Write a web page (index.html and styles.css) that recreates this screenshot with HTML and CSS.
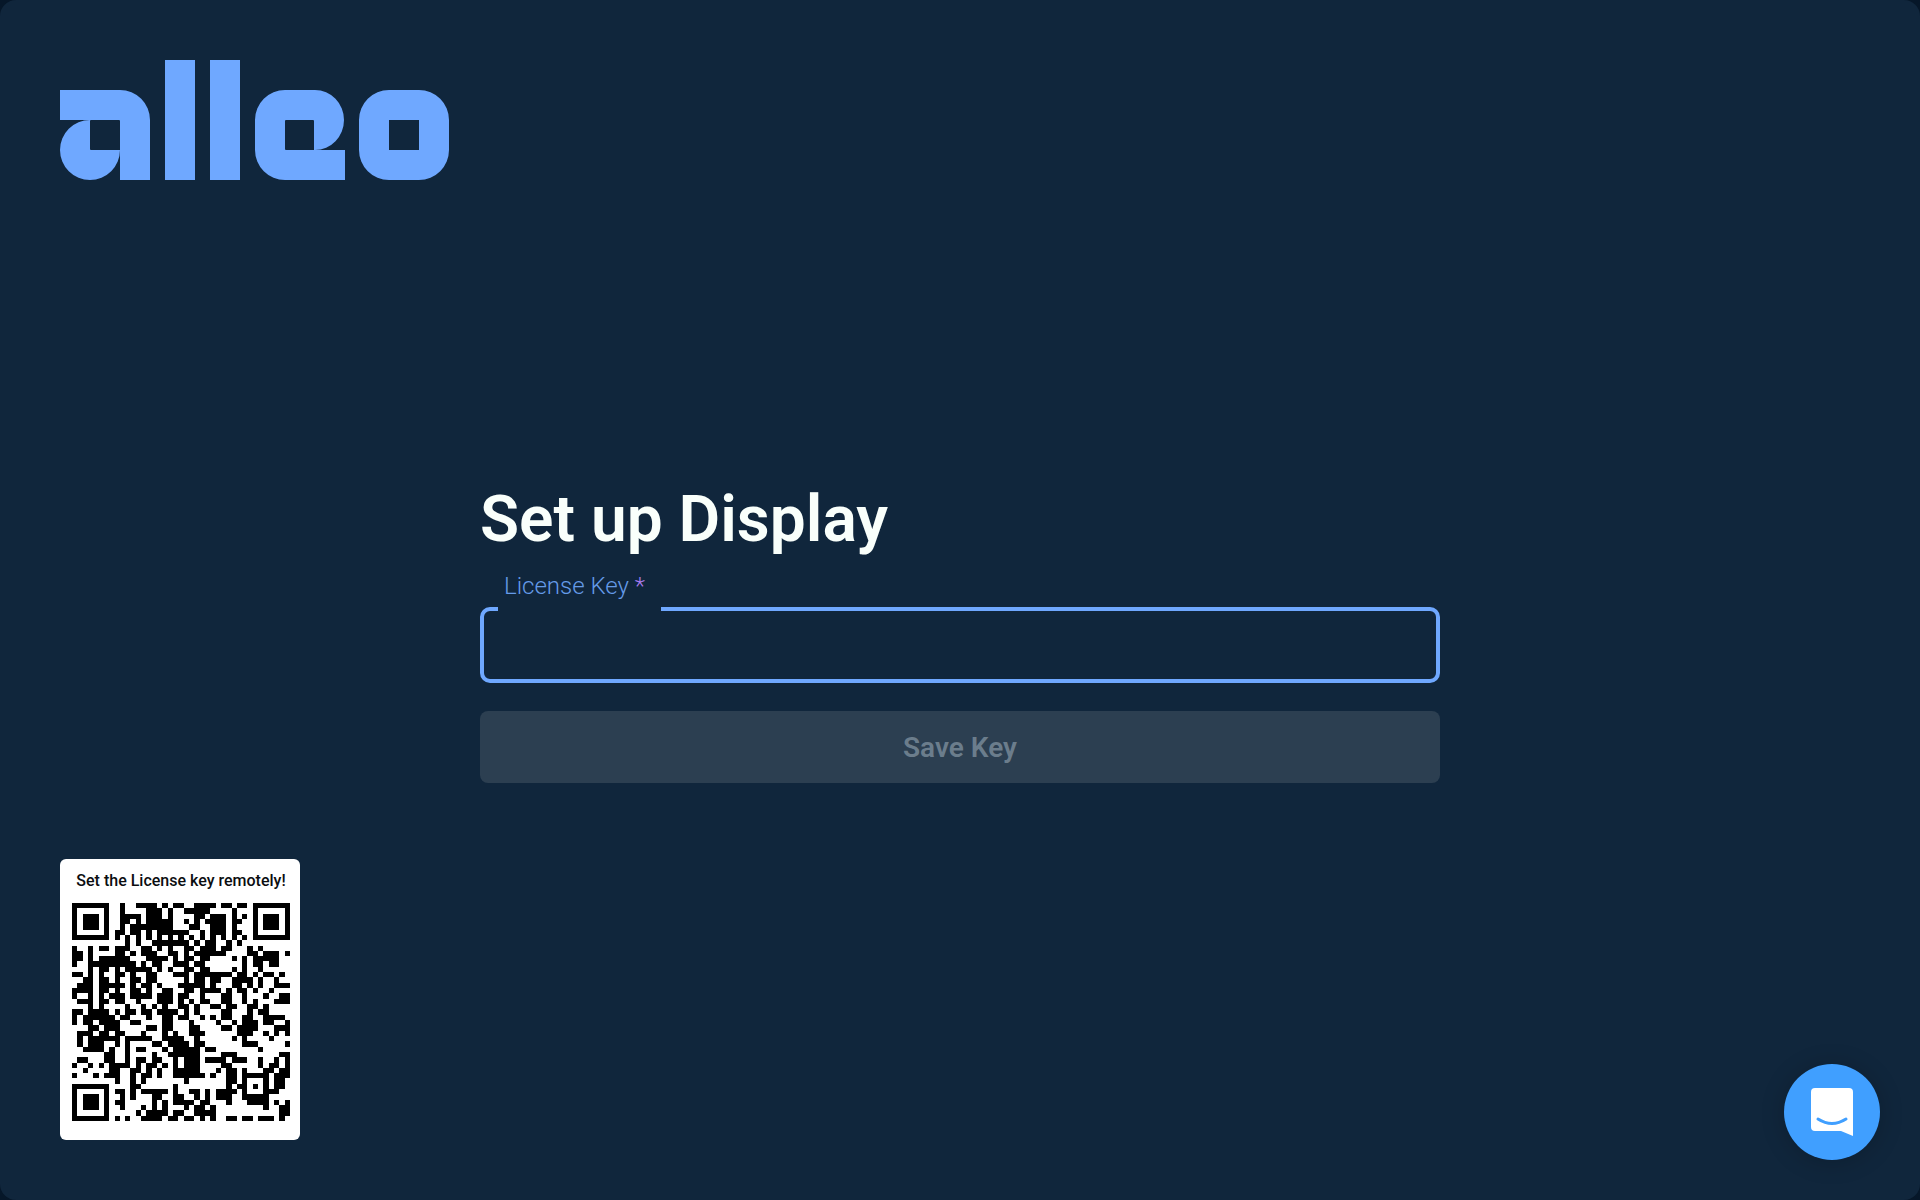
FILE: index.html
```
<!DOCTYPE html>
<html lang="en">
<head>
<meta charset="utf-8">
<meta name="viewport" content="width=device-width, initial-scale=1">
<title>Set up Display</title>
<link rel="stylesheet" href="styles.css">
</head>
<body>
<div class="screen">
  <header>
    <svg class="logo" viewBox="0 0 389 120" role="img" aria-label="alleo">
      <path d="M0 30H60A30 30 0 0 1 90 60V120H60V90A30 30 0 1 1 30 60H0ZM31 60Q30 60 30 61V89Q30 90 31 90H60V61Q60 60 59 60Z" fill-rule="evenodd"/>
      <path d="M105 0h30v120h-30zM150 0h30v120h-30z"/>
      <path d="M225 30H255A29 30 0 0 1 255 90H285V120H225A30 30 0 0 1 195 90V60A30 30 0 0 1 225 30ZM226 60Q225 60 225 61V89Q225 90 226 90H254V61Q254 60 253 60Z" fill-rule="evenodd"/>
      <path d="M329 30H359A30 30 0 0 1 389 60V90A30 30 0 0 1 359 120H329A30 30 0 0 1 299 90V60A30 30 0 0 1 329 30ZM329 60V90H359V60Z" fill-rule="evenodd"/>
    </svg>
  </header>
  <main class="setup">
    <h1>Set up Display</h1>
    <form>
      <fieldset class="field">
        <legend><label for="license">License Key <span class="required">*</span></label></legend>
        <input id="license" type="text" required>
      </fieldset>
      <button class="save" type="submit" disabled>Save Key</button>
    </form>
  </main>
  <aside class="remote">
    <p>Set the License key remotely!</p>
    <svg class="qr" viewBox="0 0 41 41" shape-rendering="crispEdges" role="img" aria-label="QR code"><path id="modules"/></svg>
  </aside>
</div>
<button class="chat" type="button" aria-label="Open chat">
  <svg viewBox="0 0 42 48"><path class="bubble" d="M4 0H38Q42 0 42 4V48L30 43H4Q0 43 0 39V4Q0 0 4 0Z"/><path class="smile" d="M7 31Q21 40 35 31"/></svg>
</button>
<script src="qr.js"></script>
</body>
</html>
```
FILE: styles.css
```
* { box-sizing: border-box; }
body {
  margin: 0;
  background: #061729;
  font-family: Roboto, "Liberation Sans", sans-serif;
}
.screen {
  min-height: 100vh;
  padding: 60px;
  display: grid;
  grid-template-rows: auto 1fr auto;
  background: #10263c;
  border-radius: 16px;
}
.logo {
  display: block;
  width: 389px;
  height: 120px;
  fill: #6fa8ff;
}
.setup {
  width: 50vw;
  justify-self: center;
  align-self: end;
  padding-bottom: 76px;
}
h1 {
  margin: 0 0 16px;
  color: #f9fffb;
  font-size: 64px;
  font-weight: 600;
  line-height: 76px;
}
form {
  display: flex;
  flex-direction: column;
  gap: 28px;
}
.field {
  height: 109px;
  margin: 0;
  padding: 0 14px;
  min-width: 0;
  border: 4px solid #6fa8ff;
  border-radius: 10px;
}
legend {
  width: 163px;
  height: 70px;
  padding: 0 6px;
  color: #659be8;
  font-size: 24px;
  font-weight: 300;
  line-height: 24px;
  white-space: nowrap;
}
.required { color: #a97cf0; }
.field input {
  display: block;
  width: 100%;
  height: 32px;
  padding: 0;
  border: 0;
  outline: 0;
  background: transparent;
  color: #f9fffb;
  font: inherit;
  font-size: 24px;
}
.save {
  height: 72px;
  border: 0;
  border-radius: 8px;
  background: #2c3f51;
  color: #6b7d8c;
  font: inherit;
  font-size: 28px;
  font-weight: 600;
}
.remote {
  width: 240px;
  padding: 12px 10px 19px 12px;
  background: #fff;
  border-radius: 6px;
}
.remote p {
  margin: 0 0 12px;
  color: #0b0d10;
  font-size: 16px;
  font-weight: 500;
  line-height: 20px;
  text-align: center;
  white-space: nowrap;
}
.qr {
  display: block;
  width: 100%;
}
.chat {
  position: fixed;
  right: 40px;
  bottom: 40px;
  width: 96px;
  height: 96px;
  display: grid;
  place-items: center;
  padding: 0;
  border: 0;
  border-radius: 50%;
  background: #409fff;
  box-shadow: 0 2px 24px rgba(0, 0, 0, 0.2);
}
.chat svg { width: 42px; height: 48px; }
.bubble { fill: #fff; }
.smile {
  fill: none;
  stroke: #409fff;
  stroke-width: 3;
  stroke-linecap: round;
}
```
FILE: qr.js
```
const rows = [
  "#######..#..####.#.##..####.##.##.#######",
  "#.....#..#....###.#..#####....#...#.....#",
  "#.###.#..####.###.#....##.###.#.#.#.###.#",
  "#.###.#..##.#.#####..#.#.####.##..#.###.#",
  "#.###.#..#.########...##..###.#...#.###.#",
  "#.....#.##.##.#.######..#.###.##..#.....#",
  "#######.#.#.#.#.#.#.#.#.#.#.#.#.#.#######",
  "..........#.#..#######.#.##..#.#.........",
  "#..#.##.###..##.#.#..##.###.##...#.#.....",
  "##.#....##.#.###..##.#.######....##.###.#",
  "##.#.######...####.#.##.##....#.#.#####..",
  "#..#########.#.##..###.##.......#.##.##..",
  "...#.##.#.#####.#.#..##.##....#.#..#.....",
  "##.#.#..##.#..##...###.#######.##.#.##.#.",
  "..##.##.#..##.##.....#.##.##..####.#..#..",
  ".###.#####.#.##.#...#####.#...##.#.#..###",
  "####.##.#..##.#..##..##.####.#.##.#..#...",
  "#..#.#.###.####.###.##..#...##..#...#..##",
  ".###.##.##..#...###.#.#.##..##..#.#...###",
  "...#.#....#..#.#.#..##.#..##.##..##.#....",
  "##.####.#.##.##.####.#.#....##...#.##....",
  "#.######.##...#..##.##..#.#.##..##..####.",
  "#.##.####..##....##...#....#..#.###.##..#",
  "...##.###.....##.##...##....##.####...###",
  ".###.##.##...#...#.#..###......###..#.#.#",
  ".#.######.#####..####..#......#.#....#...",
  ".#.###..#.#....##.####.##.......###.....#",
  "..####.#..#.##...#.#####.##........#.....",
  "......##..#....#..######....###........##",
  ".##...##..#.##.##..#.###.####.###..#..#.#",
  "#..#.#.####.#.##.#.#.###....##.....#.##.#",
  "..#....##..##.#.#..#####...#.##.#...##.##",
  "#...#.###..#.##.#..######.#..##.#####.###",
  "........#..#.#.......#.......##.#...#.##.",
  "#######....##......#.........#.##.#.#.##.",
  "#.....#.##.#.#####.#..##.#.####.#...###..",
  "#.###.#..#.#...##..##..#.#.###..#####....",
  "#.###.#.##.....#.#.####.##...#...####.#.#",
  "#.###.#..#...#.#.#...#.##.#.........#..##",
  "#.....#.....#.####.##..####............##",
  "#######.#.#..####.##.##.#.#..##.##.###.#."
];
document.getElementById("modules").setAttribute("d",
  rows.map((row, y) => [...row].map((cell, x) => cell === "#" ? `M${x} ${y}h1v1h-1z` : "").join("")).join(""));
```
